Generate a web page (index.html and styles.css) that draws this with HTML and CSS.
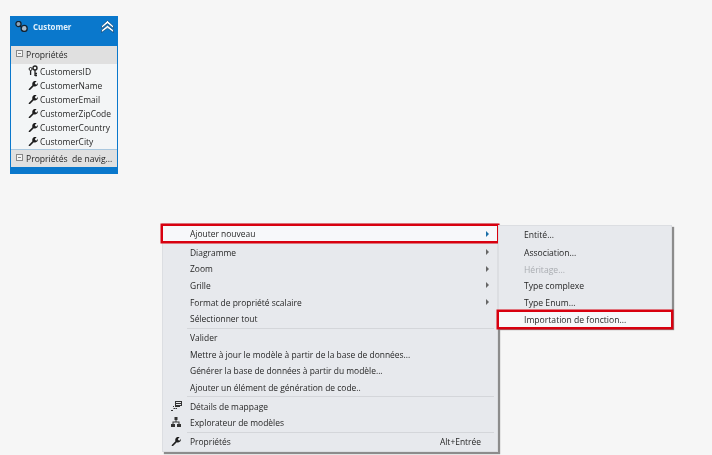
FILE: index.html
```html
<!DOCTYPE html>
<html lang="fr">
<head>
<meta charset="utf-8">
<title>Concepteur de modèles</title>
<link rel="stylesheet" href="styles.css">
</head>
<body>
<svg width="0" height="0" class="defs">
  <symbol id="wrench" viewBox="0 0 10 10"><path d="M.6 9.2 4.4 5.2C3.9 3.6 4.6 1.6 6.3 1.1 7.2.8 8 .9 8.6 1.2L6.8 2.9 7.4 4.2 8.8 4.4 9.9 2.8C10.2 4.6 9 6.4 7.2 6.5 6.6 6.5 6.2 6.4 5.8 6.2L2 10 .9 9.9Z" fill="#1e1e1e"/></symbol>
</svg>

<section class="entity">
  <header class="entity-head">
    <svg class="entity-icon" width="13" height="11" viewBox="0 0 13 11"><circle cx="3.5" cy="3" r="2.6" fill="#8ea4b8" stroke="#14222f" stroke-width="1.3"/><circle cx="9.2" cy="7.4" r="3" fill="#a9bac9" stroke="#14222f" stroke-width="1.3"/><path d="M4.5 5 7 6.5" stroke="#14222f" stroke-width="1.4"/></svg>
    <span class="entity-name">Customer</span>
    <svg class="entity-collapse" width="13" height="13" viewBox="0 0 13 13"><path d="M.5 6 6.5 .5 12.5 6V8.4L6.5 3.6.5 8.4ZM.5 10 6.5 5.2 12.5 10V12.6L6.5 8.2.5 12.6Z" fill="#fff" stroke="#0a4474" stroke-width=".7"/></svg>
  </header>
  <div class="entity-body">
    <div class="section-title"><span class="minus"></span>Propriétés</div>
    <ul class="props">
      <li><svg class="key" width="10" height="12" viewBox="0 0 10 12"><circle cx="7" cy="3" r="2" fill="none" stroke="#222" stroke-width="1.4"/><circle cx="2.6" cy="4" r="1.5" fill="none" stroke="#222"/><path d="M7 5V11M7 8.5H9M7 10.5H9M2.6 5.5V10" stroke="#222" stroke-width="1.3" fill="none"/></svg>CustomersID</li>
      <li><svg class="ico"><use href="#wrench"/></svg>CustomerName</li>
      <li><svg class="ico"><use href="#wrench"/></svg>CustomerEmail</li>
      <li><svg class="ico"><use href="#wrench"/></svg>CustomerZipCode</li>
      <li><svg class="ico"><use href="#wrench"/></svg>CustomerCountry</li>
      <li><svg class="ico"><use href="#wrench"/></svg>CustomerCity</li>
    </ul>
    <div class="section-title nav-title"><span class="minus"></span>Propriétés&nbsp; de navig...</div>
  </div>
  <div class="entity-foot"></div>
</section>

<nav class="menu main-menu">
  <div class="item boxed first"><span>Ajouter nouveau</span><i class="arrow blue"></i></div>
  <div class="item"><span>Diagramme</span><i class="arrow"></i></div>
  <div class="item"><span>Zoom</span><i class="arrow"></i></div>
  <div class="item"><span>Grille</span><i class="arrow"></i></div>
  <div class="item"><span>Format de propriété scalaire</span><i class="arrow"></i></div>
  <div class="item"><span>Sélectionner tout</span></div>
  <hr>
  <div class="item"><span>Valider</span></div>
  <div class="item"><span>Mettre à jour le modèle à partir de la base de données...</span></div>
  <div class="item"><span>Générer la base de données à partir du modèle...</span></div>
  <div class="item"><span>Ajouter un élément de génération de code..</span></div>
  <hr>
  <div class="item"><svg class="lead" width="11" height="10" viewBox="0 0 11 10"><path d="M4 0H11V5H9V6H4ZM5 1V2H10V1ZM5 3V4H10V3Z" fill="#333" fill-rule="evenodd"/><path d="M2 5H3V6H2ZM0 9H2V10H0ZM2.5 7H4.5V8H2.5ZM5 7H6V8H5Z" fill="#333"/></svg><span>Détails de mappage</span></div>
  <div class="item"><svg class="lead" width="10" height="10" viewBox="0 0 10 10"><path d="M3.5 0H6.5V3H5.5V4.5H8.5V7H10V10H6V7H7.5V5.5H2.5V7H4V10H0V7H1.5V4.5H4.5V3H3.5Z" fill="#333"/></svg><span>Explorateur de modèles</span></div>
  <hr>
  <div class="item"><svg class="lead" width="10" height="10"><use href="#wrench"/></svg><span>Propriétés</span><em>Alt+Entrée</em></div>
</nav>

<nav class="menu sub-menu">
  <div class="item first"><span>Entité...</span></div>
  <div class="item top2"><span>Association...</span></div>
  <div class="item off"><span>Héritage...</span></div>
  <div class="item"><span>Type complexe</span></div>
  <div class="item"><span>Type Enum...</span></div>
  <div class="item boxed"><span>Importation de fonction...</span></div>
</nav>
</body>
</html>
```
FILE: styles.css
```css
* { box-sizing: border-box; }
html, body { height: 100%; }
body {
  margin: 0;
  background: #f6f6f6;
  font-family: "Open Sans", "Noto Sans", sans-serif;
  font-size: 8.45px;
  color: #262626;
  overflow: hidden;
  position: relative;
}
.defs { position: absolute; }

.entity {
  position: absolute;
  left: 10px; top: 16px;
  width: 108px; height: 158px;
  display: flex;
  flex-direction: column;
  background: #0a78cc;
  padding: 0 1px;
  filter: blur(.3px);
}
.entity-head {
  height: 30px;
  flex: none;
  display: flex;
  align-items: flex-start;
  padding: 3px 3px 0 3px;
}
.entity-icon { margin: 2px 0 0 1px; }
.entity-name { margin: 3px 0 0 5px; color: #e3f1fb; font-weight: 700; font-size: 7.9px; flex: 1; }
.entity-collapse { margin-top: 1px; }
.entity-body {
  flex: 1;
  background: #f3f5f6;
  display: flex;
  flex-direction: column;
}
.section-title {
  height: 18px;
  background: #e0e0e0;
  display: flex;
  align-items: center;
  padding-left: 5px;
  font-size: 8.6px;
}
.minus {
  width: 7px; height: 7px;
  border: 1px solid #888;
  background: linear-gradient(#888,#888) center / 3px 1px no-repeat #f4f4f4;
  margin: -3px 3px 0 0;
}
.props { list-style: none; margin: 0; padding: 0; flex: 1; }
.props li {
  height: 14px;
  display: flex;
  align-items: center;
  padding-left: 17px;
  font-size: 8.45px;
  white-space: nowrap;
}
.ico { width: 10px; height: 10px; margin-right: 2px; flex: none; }
.key { margin-right: 2px; flex: none; }
.nav-title { border-top: 1px solid #a9c7de; flex: none; }
.entity-foot { height: 7px; flex: none; }

.menu {
  position: absolute;
  background: #e7e9ed;
  border: 1px solid #dcdee2;
  box-shadow: 2px 2px 1px #8c8c8c;
  filter: blur(.3px);
}
.main-menu { left: 162px; top: 223px; width: 336px; height: 229px; padding-top: 2px; }
.sub-menu { left: 498px; top: 225px; width: 174px; height: 103px; padding-top: 1px; font-size: 8.6px; z-index: 1; }
.item {
  height: 16.6px;
  display: flex;
  align-items: center;
  padding-left: 27px;
  white-space: nowrap;
  position: relative;
}
.item span { flex: 1; }
.sub-menu .item { padding-left: 25px; height: 16.7px; }
.top2 { margin-top: 1px; }
.boxed {
  background: #f7f8fa;
  box-shadow: 0 0 0 2.5px #d8000f;
  z-index: 1;
}
.main-menu .boxed { height: 15px; margin: 0 0 3px; }
.sub-menu .boxed { height: 15px; margin: 1px 0 0; }
.off { color: #a9acb1; }
hr {
  margin: .6px 3px .6px 24px;
  height: 1px;
  border: 0;
  background: #d4d6da;
}
.arrow {
  position: absolute;
  right: 8px; top: 50%;
  margin-top: -3px;
  border-left: 3px solid #666;
  border-top: 3px solid transparent;
  border-bottom: 3px solid transparent;
}
.arrow.blue { border-left-color: #1b6fa8; }
.lead { position: absolute; left: 8px; top: 3px; }
em { font-style: normal; margin-right: 16px; }
```
